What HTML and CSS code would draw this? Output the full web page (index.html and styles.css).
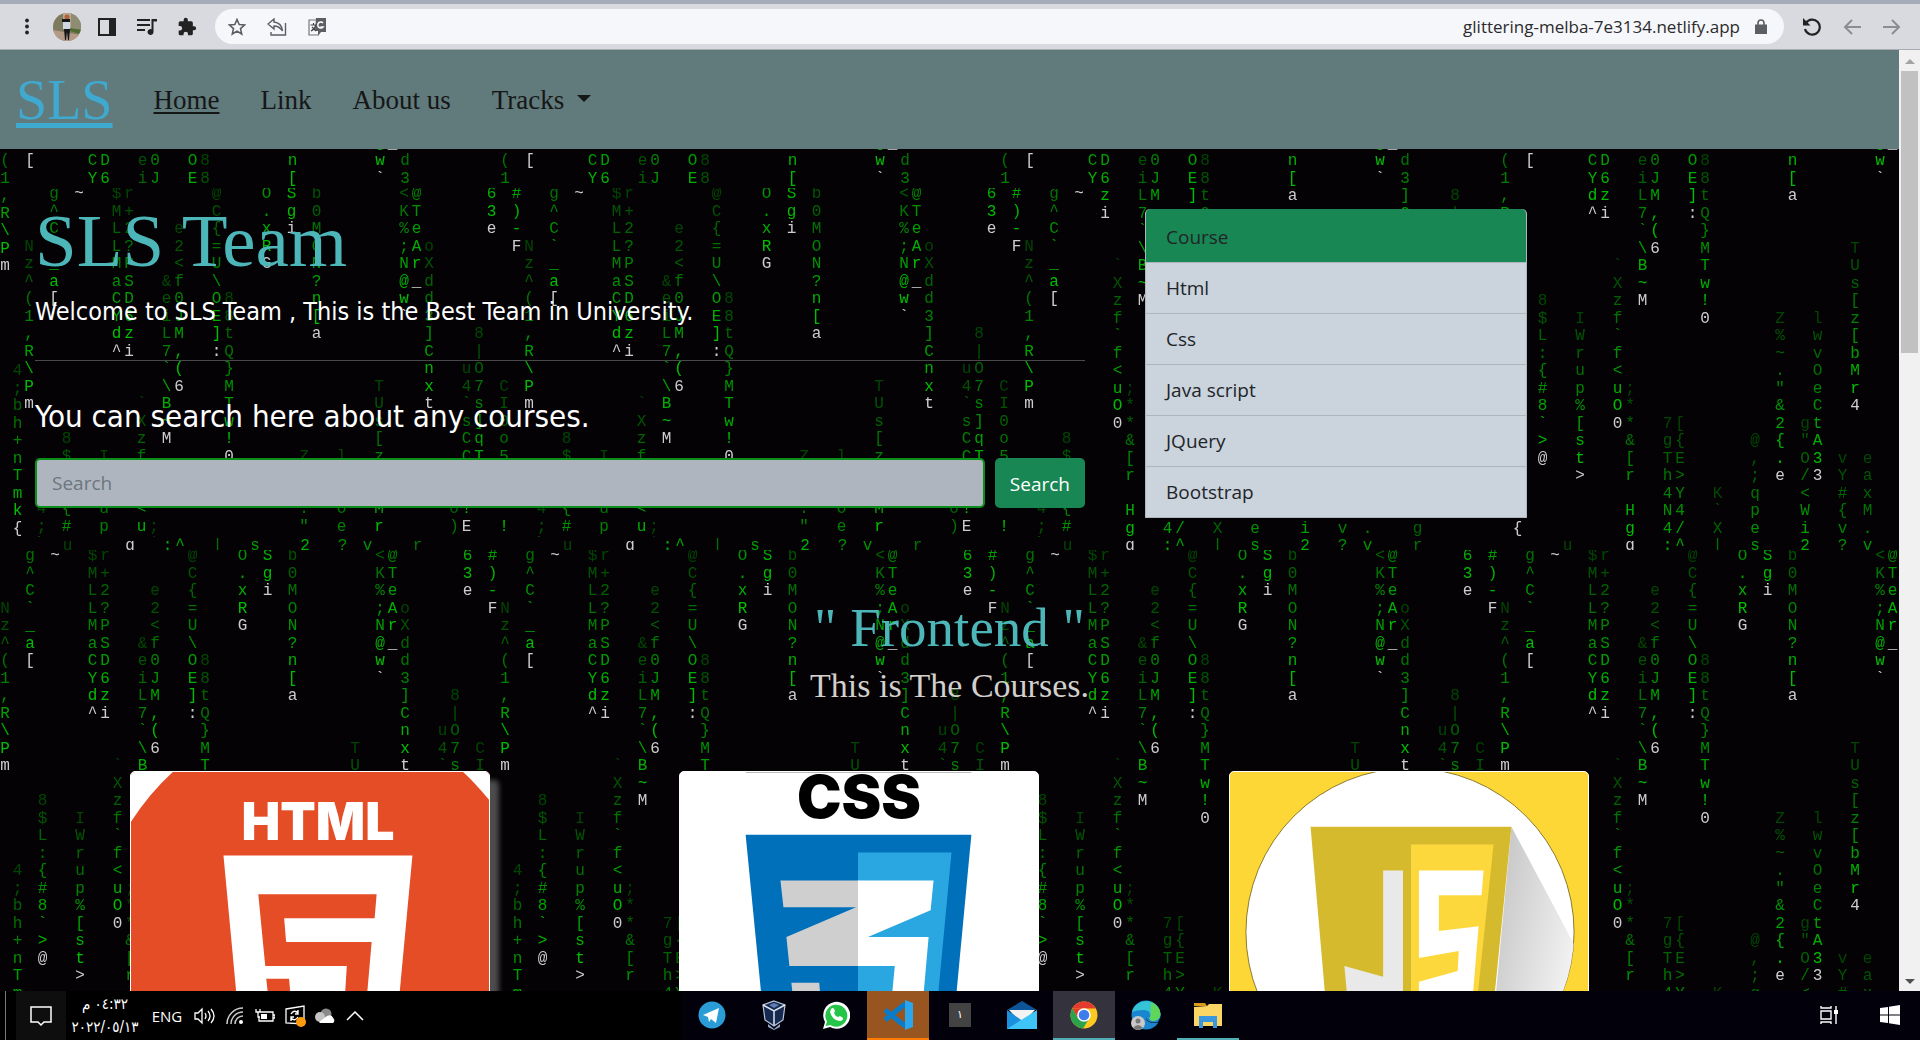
FILE: index.html
```html
<!DOCTYPE html>
<html lang="en">
<head>
<meta charset="utf-8">
<title>SLS Team</title>
<link rel="stylesheet" href="styles.css">
<script src="script.js"></script>
</head>
<body>
<header class="browser">
  <div class="tool-group">
    <button class="tool" aria-label="Menu"><svg width="20" height="20" viewBox="0 0 20 20"><g fill="#222"><circle cx="10" cy="3.500" r="1.900"/><circle cx="10" cy="9.500" r="1.900"/><circle cx="10" cy="15.500" r="1.900"/></g></svg></button>
    <button class="tool" aria-label="Profile"><svg width="28" height="28" viewBox="0 0 28 28"><defs><clipPath id="av"><circle cx="14" cy="14" r="14"/></clipPath></defs><g clip-path="url(#av)"><path fill="#7d7a5e" d="M0 0h28v28H0z"/><path fill="#b9a98c" d="M10 0h9v16h-9z"/><path fill="#8f8c74" d="M18 0h10v16H18z"/><path fill="#4d6b32" d="M17 15l11 2v4l-11-3z"/><path fill="#b59a86" d="M0 17l28 5v6H0z"/><circle cx="14" cy="4" r="2.500" fill="#b0603a"/><path fill="#cfd8e2" d="M10 7h7v9h-7z"/><path fill="#15161b" d="M9 6h8v3H9zM11 16h6l-1 11h-1l-1-8-1 8h-1z"/></g></svg></button>
    <button class="tool" aria-label="Side panel"><svg width="18" height="18" viewBox="0 0 18 18"><path fill="#222" d="M0 0h18v18H0zM2 2v14h9V2z" fill-rule="evenodd"/></svg></button>
    <button class="tool" aria-label="Media"><svg width="20" height="18" viewBox="0 0 20 18"><path d="M0 2h13M0 7h13M0 12h8" stroke="#222" stroke-width="2"/><path fill="#222" d="M14.500 1H20v2.500h-3.500V14a3 3 0 1 1-2-2.800z"/></svg></button>
    <button class="tool" aria-label="Extensions"><svg width="20" height="20" viewBox="0 0 24 24"><path fill="#222" d="M20.500 11H19V7a2 2 0 0 0-2-2h-4V3.500a2.500 2.500 0 0 0-5 0V5H4a2 2 0 0 0-2 2v3.800h1.500a2.700 2.700 0 0 1 0 5.400H2V20a2 2 0 0 0 2 2h3.800v-1.500a2.700 2.700 0 0 1 5.400 0V22H17a2 2 0 0 0 2-2v-4h1.500a2.500 2.500 0 0 0 0-5z"/></svg></button>
  </div>
  <div class="omnibox">
    <button class="tool" aria-label="Bookmark"><svg width="18" height="18" viewBox="0 0 18 18"><path d="M9 1.500l2.200 5 5.300.5-4 3.600 1.200 5.400L9 13.100 4.300 16l1.200-5.400-4-3.600 5.300-.5z" fill="none" stroke="#5b5e63" stroke-width="1.600"/></svg></button>
    <button class="tool" aria-label="Share"><svg width="20" height="18" viewBox="0 0 20 18"><path d="M18.500 5v12H4v-3M7 1L1 6l6 5V8c4 0 6 1 8.500 5C15 8 12 4.500 7 4z" fill="none" stroke="#5b5e63" stroke-width="1.400"/></svg></button>
    <button class="tool" aria-label="Translate"><svg width="18" height="18" viewBox="0 0 18 18"><path d="M9 2H1v15h9" fill="none" stroke="#777" stroke-width="1.200"/><path fill="#5b5e63" d="M8 0h10v14h-5l-3 4V13H7z"/><path d="M15 5a3 3 0 1 0 0 4h-2.500" fill="none" stroke="#fff" stroke-width="1.500"/><path d="M2.500 7h6M5.500 5v2M8 7c-1 4-3 5-5 6M4 9l4 4" fill="none" stroke="#444" stroke-width="1.200"/></svg></button>
    <input class="address" type="text" aria-label="Address" value="glittering-melba-7e3134.netlify.app">
    <svg class="lock" width="12" height="15" viewBox="0 0 12 15"><path fill="#5b5e63" d="M0 5.500h12V15H0z"/><path d="M3 6V4a3 3 0 0 1 6 0v2" fill="none" stroke="#5b5e63" stroke-width="1.600"/></svg>
  </div>
  <div class="tool-group">
    <button class="tool" aria-label="Reload"><svg width="20" height="18" viewBox="0 0 20 18"><path d="M4 5a7.500 7.500 0 1 1-1 6" fill="none" stroke="#222" stroke-width="2.200"/><path fill="#222" d="M1 0v7.500h7.500z"/></svg></button>
    <button class="tool" aria-label="Back"><svg width="18" height="16" viewBox="0 0 18 16"><path d="M9 1L2 8l7 7M2 8h16" fill="none" stroke="#8b8d93" stroke-width="2"/></svg></button>
    <button class="tool" aria-label="Forward"><svg width="18" height="16" viewBox="0 0 18 16"><path d="M9 1l7 7-7 7M16 8H0" fill="none" stroke="#8b8d93" stroke-width="2"/></svg></button>
  </div>
</header>

<div class="viewport">
  <div class="page">
    <nav class="navbar">
      <a class="brand" href="#">SLS</a>
      <a class="nav-link active" href="#">Home</a>
      <a class="nav-link" href="#">Link</a>
      <a class="nav-link" href="#">About us</a>
      <a class="nav-link dropdown" href="#">Tracks</a>
    </nav>
    <main>
      <section class="hero">
        <div class="intro">
          <h1>SLS Team</h1>
          <p class="welcome">Welcome to SLS Team , This is the Best Team in University.</p>
          <hr>
          <h2>You can search here about any courses.</h2>
          <form class="search">
            <input type="search" placeholder="Search" aria-label="Search">
            <button type="button">Search</button>
          </form>
        </div>
        <ul class="courses">
          <li class="head">Course</li>
          <li>Html</li>
          <li>Css</li>
          <li>Java script</li>
          <li>JQuery</li>
          <li>Bootstrap</li>
        </ul>
      </section>
      <section class="tracks">
        <h2 class="track-title">" Frontend "</h2>
        <p class="track-sub">This is The Courses.</p>
        <div class="cards">
          <article class="card raised">
            <svg viewBox="0 0 360 360" role="img" aria-label="HTML 5">
              <path fill="#e44d26" d="M0 0h360v360H0z"/>
              <path fill="#fff" d="M0 0h42Q18 22 0 50zM334 0h26v28Q346 11 334 0z"/>
              <text class="logo-word" x="188" y="68" font-size="52" fill="#fff">HTML</text>
              <path fill="#fff" d="M93 84h190l-22 236-73 24-73-24z"/>
              <path fill="#e44d26" d="M128 123h119l-2 24h-91l2 24h86l-8 92-46 13-46-13-6-55h23l3 36 26 8 26-8 3-49H135z"/>
            </svg>
          </article>
          <article class="card">
            <svg viewBox="0 0 360 360" role="img" aria-label="CSS 3">
              <path fill="#fff" d="M0 0h360v360H0z"/>
              <path fill="#bbb" d="M66 0h227v1H66z"/>
              <text class="logo-word" x="180" y="46" font-size="60" fill="#000">CSS</text>
              <path fill="#0070bb" d="M66 63h227l-25 266-88 25-88-25z"/>
              <path fill="#2aa7e0" d="M179 81h94l-22 234-72 20z"/>
              <path fill="#d0cfcf" d="M101 109h79v86h-70l-3-29 70-30h-73zM112 212h28l3 35 37 11v28l-62-18z"/>
              <path fill="#fff" d="M179 109h76l-3 30-63 27h61l-9 102-62 18v-28l32-10 5-53h-37z"/>
            </svg>
          </article>
          <article class="card">
            <svg viewBox="0 0 360 360" role="img" aria-label="JavaScript">
              <defs>
                <linearGradient id="cast" x1="0" y1="0" x2="1" y2="0.600"><stop offset="0" stop-color="#bdbdbd"/><stop offset="1" stop-color="#f6f6f6"/></linearGradient>
                <clipPath id="disc"><circle cx="181" cy="161" r="165"/></clipPath>
              </defs>
              <path fill="#fdd736" d="M0 0h360v360H0z"/>
              <circle cx="181" cy="161" r="165" fill="#fff" stroke="#8a7a30" stroke-width="1"/>
              <path clip-path="url(#disc)" fill="url(#cast)" d="M283 55l64 120v160h-90z"/>
              <path fill="#d5ba2e" d="M81 55h202l-22 220-80 24-81-24z"/>
              <path fill="#fdd83c" d="M182 73h83l-20 190-63 20z"/>
              <path fill="#e9e9e9" d="M154 99h20v146l-56-18-3-32 39 11z"/>
              <path fill="#fff" d="M190 99h65l-2 25h-43v36l40-5-6 72-54 18v-34l39-11 1-20-40 7z"/>
            </svg>
          </article>
        </div>
      </section>
    </main>
  </div>
  <div class="scrollbar">
    <span class="arrow up"></span>
    <span class="thumb"></span>
    <span class="arrow down"></span>
  </div>
</div>

<footer class="taskbar">
  <div class="tray">
    <button class="notify" aria-label="Notifications"><svg width="22" height="22" viewBox="0 0 22 22"><path d="M1 2h20v15h-7l-3 3-3-3H1z" fill="none" stroke="#fff" stroke-width="1.500"/></svg></button>
    <div class="clock"><span dir="rtl">٠٤:٣٢ م</span><span>٢٠٢٢/٠٥/١٣</span></div>
    <span class="lang">ENG</span>
    <button class="tray-icon" aria-label="Volume"><svg width="22" height="18" viewBox="0 0 22 18"><path d="M1 6h3l4-4v14l-4-4H1zM11 6q2 3 0 6M14 4q4 5 0 10M17 2q6 7 0 14" fill="none" stroke="#fff" stroke-width="1.300"/></svg></button>
    <button class="tray-icon" aria-label="Wi-Fi"><svg width="18" height="18" viewBox="0 0 18 18"><path d="M1 17A16 16 0 0 1 17 1M5 17A12 12 0 0 1 17 5M9 17a8 8 0 0 1 8-8" fill="none" stroke="#ccc" stroke-width="1.500"/><circle cx="15" cy="15" r="2" fill="#fff"/></svg></button>
    <button class="tray-icon" aria-label="Battery"><svg width="20" height="16" viewBox="0 0 20 16"><path d="M5 4h13v9H4V9M18 7h2v3h-2M1 1v3h4V1M3 4v5h2" fill="none" stroke="#fff" stroke-width="1.300"/><path fill="#fff" d="M6 6h6v5H6z"/></svg></button>
    <button class="tray-icon" aria-label="Updates"><svg width="22" height="22" viewBox="0 0 22 22"><path d="M2 4l18-3v18L2 18z" fill="none" stroke="#fff" stroke-width="1.300"/><path d="M7 9q3-5 7-1M14 5v4h-3M14 12q-3 5-7 1M7 16v-4h3" fill="none" stroke="#fff" stroke-width="1.400"/><circle cx="17" cy="17" r="5" fill="#ff9a0c"/></svg></button>
    <button class="tray-icon" aria-label="OneDrive"><svg width="22" height="16" viewBox="0 0 22 16"><circle cx="12" cy="6" r="5.500" fill="#8a8a8a"/><circle cx="6" cy="9" r="5" fill="#c4c4c4"/><path fill="#fff" d="M5 14l8-6q5-2 6 2a3 3 0 0 1 0 5H6z"/></svg></button>
    <button class="tray-icon" aria-label="Show hidden icons"><svg width="18" height="10" viewBox="0 0 18 10"><path d="M1 9l8-8 8 8" fill="none" stroke="#fff" stroke-width="1.500"/></svg></button>
  </div>
  <div class="apps">
    <button class="app" aria-label="Telegram"><svg width="28" height="28" viewBox="0 0 28 28"><circle cx="14" cy="14" r="13.500" fill="#2a9dd6"/><path fill="#fff" d="M5 14l16-7-3 15-5-4-2 3-1-5z"/></svg></button>
    <button class="app" aria-label="VirtualBox"><svg width="26" height="30" viewBox="0 0 26 30"><path fill="#8fa5c8" d="M7 24l6 5 6-5v3l-6 3-6-3z"/><path fill="#16294f" stroke="#b9c6dc" stroke-width="1.200" d="M13 1l11 4-2 15-9 6-9-6L2 5z"/><path fill="#5f7fb4" d="M8 5l5-2 5 2-5 3z"/><path d="M2 5l11 6 11-6M13 11v14" stroke="#dbe4f2" stroke-width="1.500" fill="none"/></svg></button>
    <button class="app" aria-label="WhatsApp"><svg width="28" height="28" viewBox="0 0 28 28"><path fill="#fff" d="M1 28l2-7A13.500 13.500 0 1 1 8 26z"/><path fill="#25c648" d="M3.500 25l1.500-4.500A11 11 0 1 1 8.500 24z"/><path fill="#fff" d="M9 8q2-2 3 0l1 2-1 2q1 3 4 4l2-1 3 2q0 3-3 3Q10 19 8 11z"/></svg></button>
    <button class="app code" aria-label="Visual Studio Code"><svg width="30" height="30" viewBox="0 0 30 30"><path d="M2 10l20 16M2 20L22 4" stroke="#0a7bc8" stroke-width="5"/><path fill="#2aa6ee" d="M22 0l8 3v24l-8 3V8z"/><path fill="#98551f" d="M22 9v12l-8-6z"/></svg></button>
    <button class="app" aria-label="Calendar"><span class="date-tile">١</span></button>
    <button class="app" aria-label="Mail"><svg width="30" height="30" viewBox="0 0 30 30"><path fill="#0d5599" d="M0 10L15 1l15 9z"/><path fill="#f3f3f3" d="M2 10h26L15 24z"/><path fill="#1b90dc" d="M0 10l17 12 13 7H0z"/><path fill="#3fc4f7" d="M30 10L0 29h30z"/><path fill="#f3f3f3" d="M4 10h22l-11 9z"/></svg></button>
    <button class="app chrome" aria-label="Chrome"><svg width="28" height="28" viewBox="0 0 28 28"><circle cx="14" cy="14" r="13.500" fill="#fdc921"/><path fill="#e33b2e" d="M2.300 7.200A13.500 13.500 0 0 1 25.700 7.500H14z"/><path fill="#e33b2e" d="M2.300 7.200L8.500 18 14 7.500z"/><path fill="#2ba24c" d="M2.300 7.200A13.500 13.500 0 0 0 13 27.500L19.500 17 8.500 18z"/><circle cx="14" cy="14" r="6.800" fill="#fff"/><circle cx="14" cy="14" r="5.300" fill="#3f7eea"/></svg></button>
    <button class="app" aria-label="Edge"><svg width="30" height="30" viewBox="0 0 30 30"><circle cx="15" cy="15" r="14.500" fill="#1b86cf"/><path fill="#35c3d6" d="M1 12A14.500 14.500 0 0 1 29.500 14q0 7-8 7-5-1-2-5 0-6-7-6-7 0-11.500 2z"/><path fill="#5fd65a" d="M20 2q9 4 9.500 12-.5 6-8 7-5-1-2-5z"/><path fill="#02010b" d="M15 17q1 7 12 5l2-4 1 4-6 1q-9 0-9-6z"/><circle cx="7" cy="23" r="7" fill="#c9c9c9"/><circle cx="7" cy="21" r="2.500" fill="#777"/><path fill="#777" d="M2 28q5-6 10 0l-5 2z"/></svg></button>
    <button class="app files" aria-label="File Explorer"><svg width="28" height="26" viewBox="0 0 28 26"><path fill="#d99a15" d="M0 1h11l2 3H0z"/><path fill="#fbd664" d="M0 5l13-1 2-2h13v22H0z"/><path fill="#3a97dd" d="M5 14h18v12h-4v-6H9v6H5z"/></svg></button>
  </div>
  <div class="corner">
    <button class="app" aria-label="Task view"><svg width="20" height="18" viewBox="0 0 20 18"><path d="M1 5h10v8H1zM1 0v2h10V0M1 18v-2h10v2M16 0v18" fill="none" stroke="#fff" stroke-width="1.400"/><path fill="#fff" d="M14 4h4v4h-4z"/></svg></button>
    <button class="app" aria-label="Start"><svg width="20" height="20" viewBox="0 0 20 20"><path fill="#fff" d="M0 3l8-1v7.500H0zM9 1.800L20 0v9.500H9zM0 10.500h8V18l-8-1zM9 10.500h11V20L9 18.200z"/></svg></button>
  </div>
</footer>
</body>
</html>
```
FILE: styles.css
```css
* { box-sizing: border-box; }

:root {
  --sans: "Open Sans", "Noto Sans", sans-serif;
  --serif: "Liberation Serif", serif;
  --wide: "DejaVu Sans Condensed", "DejaVu Sans", sans-serif;
  --green: #198754;
  --teal: #4db6b8;
}

body {
  margin: 0;
  height: 100vh;
  display: flex;
  flex-direction: column;
  overflow: hidden;
  font-family: var(--sans);
  background: #040205;
}

button { border: 0; padding: 0; background: none; font: inherit; color: inherit; }
h1, h2, p, ul { margin: 0; padding: 0; font-weight: 400; }

/* Browser toolbar */
.browser {
  flex: none;
  display: flex;
  align-items: center;
  gap: 8px;
  height: 50px;
  padding: 0 8px 0 7px;
  background: #d9dae0;
  border-top: 4px solid #a5abb9;
  border-bottom: 1px solid #a9acb1;
}
.tool-group { display: flex; }
.tool {
  width: 40px;
  height: 35px;
  display: flex;
  align-items: center;
  justify-content: center;
}
.omnibox {
  flex: 1;
  display: flex;
  align-items: center;
  height: 35px;
  padding: 0 17px 0 2px;
  border-radius: 18px;
  background: #f6f7fa;
}
.address {
  flex: 1;
  border: 0;
  background: none;
  text-align: right;
  font: 17px/24px var(--sans);
  color: #2a2b2e;
  padding: 0 15px 0 0;
}

/* Page area with its scrollbar */
.viewport { flex: 1; min-height: 0; display: flex; }
.page {
  flex: 1;
  overflow: hidden;
  background: #040205 var(--rain) 0 0;
}
.scrollbar {
  flex: none;
  width: 21px;
  display: flex;
  flex-direction: column;
  align-items: center;
  padding: 9px 0 7px;
  background: #f1f1f1;
}
.arrow { border: 5px solid transparent; height: 5px; }
.arrow.up { border-top: 0; border-bottom-color: #a3a3a3; }
.arrow.down { border-bottom: 0; border-top-color: #505050; margin-top: auto; }
.thumb { width: 17px; height: 282px; margin-top: 7px; background: #c1c1c1; }

.navbar {
  display: flex;
  align-items: center;
  gap: 41px;
  height: 99px;
  padding: 0 16px;
  background: #617a7b;
  font-family: var(--serif);
}
.brand { font-size: 56px; line-height: 64px; color: #3fa9cf; text-decoration-thickness: 5px; text-underline-offset: 4px; }
.nav-link { font-size: 27px; line-height: 36px; color: #151717; text-decoration: none; }
.nav-link.active { text-decoration: underline; text-decoration-thickness: 2px; text-underline-offset: 3px; }
.dropdown::after {
  content: "";
  display: inline-block;
  margin-left: 13px;
  vertical-align: 7px;
  border: 7px solid transparent;
  border-top-color: #151717;
  border-bottom: 0;
}

.hero {
  display: flex;
  align-items: flex-start;
  gap: 49px;
  padding: 39px 372px 0 24px;
}
.intro {
  flex: 1;
  padding: 10px 11px 29px;
  background: #040205 var(--rain) 0 0;
  color: #fff;
}
.intro h1 { font: 75px/86px var(--serif); color: var(--teal); }
.welcome { margin-top: 8px; font: 25px/40px var(--wide); }
.intro hr { height: 1px; margin: 28px 0 35px; border: 0; background: #4a484b; }
.intro h2 { font: 31px/40px var(--wide); }
.search { display: flex; gap: 10px; margin-top: 22px; }
.search input {
  flex: 1;
  height: 50px;
  padding: 0 15px;
  border: 2px solid #0a8f1a;
  border-radius: 5px;
  background: #aeb5bf;
  font: 19px/30px var(--sans);
}
.search input::placeholder { color: #6c757d; opacity: 1; }
.search button {
  padding: 2px 15px 0;
  border-radius: 5px;
  background: var(--green);
  color: #fff;
  font-size: 19px;
}

.courses {
  width: 382px;
  margin: 21px 0 0;
  list-style: none;
  border: 1px solid #adb5bd;
  border-top: 0;
  border-radius: 5px 5px 0 0;
  overflow: hidden;
  background: #cbd3dc;
  color: #212529;
}
.courses li { padding: 10px 20px; font-size: 19px; line-height: 30px; }
.courses li + li { border-top: 1px solid #adb5bd; }
.courses .head { padding: 13px 20px 10px; background: var(--green); }

.tracks { padding-top: 60px; }
.track-title { font: 55px/62px var(--serif); color: var(--teal); text-align: center; }
.track-sub { margin-top: 7px; font: 34px/40px var(--serif); color: #d3cfcc; text-align: center; }
.cards {
  display: grid;
  grid-template-columns: repeat(3, 1fr);
  justify-items: center;
  margin-top: 65px;
  padding: 0 215px 0 35px;
}
.card {
  width: 360px;
  border: 1px solid #fff;
  border-radius: 5px;
  overflow: hidden;
  background: #fff;
}
.card svg { display: block; width: 100%; }
.raised { box-shadow: 9px 9px 5px #4c4c4c; }
.logo-word { font-family: Inter, sans-serif; font-weight: 900; text-anchor: middle; }

/* Taskbar */
.taskbar {
  flex: none;
  display: grid;
  grid-template-columns: 1fr auto 1fr;
  height: 49px;
  background: #02010b;
  color: #fff;
}
.tray { display: flex; align-items: center; padding-left: 5px; background: #000; }
.tray::before { content: ""; width: 1px; height: 49px; margin-right: 10px; background: #777; }
.notify { width: 50px; height: 49px; display: grid; place-items: center; background: #0e0e0e; }
.clock {
  width: 78px;
  display: flex;
  flex-direction: column;
  align-items: center;
  font: 15px/23px "DejaVu Sans Condensed", "DejaVu Sans", sans-serif;
}
.lang { width: 46px; text-align: center; font-size: 15px; }
.tray-icon { width: 30px; height: 49px; display: grid; place-items: center; }
.apps { display: flex; }
.app { width: 62px; height: 49px; display: grid; place-items: center; border-bottom: 2px solid transparent; }
.code { background: #98551f; border-color: #ff7a00; }
.chrome { background: #34323c; border-color: #4fadb3; }
.files { border-color: #4fadb3; }
.date-tile { width: 22px; height: 24px; background: #434343; font: 11px/24px "DejaVu Sans", sans-serif; text-align: center; }
.corner { display: flex; justify-content: flex-end; }
.corner .app { width: 60px; }
```
FILE: script.js
```js
// Falling-code wallpaper: a 500x500 tile of 40 columns by 29 rows.
// Each stream is [column, first row, characters, row of its bright head].
const streams = [
  [0, 3, "Nz^(1,R\\Pm", 12],
  [1, 18, "4;bh+nTmk{", 27],
  [2, 0, "g^C`_a[", 6],
  [3, 14, "8$L:{#8`>@", 23],
  [4, 0, "~", 0],
  [5, 28, "u", 37],
  [6, 15, "IWrup%[st>", 24],
  [7, 0, "$MLLMaCYd^", 9],
  [8, 0, "r+2?PSD6zi", 9],
  [9, 12, "`Xzf`f<uO0", 21],
  [10, 19, ";**&[r Hgq", 28],
  [11, 5, "&eiL7`\\B~M", 14],
  [12, 2, "e2<f0JM,(6", 11],
  [13, 21, "7gTh4N4:", 30],
  [14, 21, "[{E>Y4/^", 30],
  [15, 0, "@C{=U\\OE]:", 9],
  [16, 6, "88tQ}MTw!0", 15],
  [17, 25, "K`X|", 34],
  [19, 0, "O.xRG", 4],
  [20, 22, "@,;qpes", 31],
  [21, 0, "Sgi", 2],
  [22, 15, "Z%~.\"&2{.e", 24],
  [23, 0, "b0MON?n[a", 8],
  [24, 21, "g\"O/<Wi2", 30],
  [25, 15, "lwvOeCtA33", 24],
  [27, 23, "vY#{v?", 32],
  [28, 11, "TUs[z[bMr4", 20],
  [29, 23, "eaxM.v", 32],
  [30, 0, "<K%;N@w`", 7],
  [31, 0, "@TeAr_", 5],
  [32, 3, "oXdd3]Cnxt", 12],
  [33, 27, "gr", 34],
  [34, 18, "0)", 25],
  [35, 10, "u4`sCC  !E", 19],
  [36, 8, "8|O7s]qT", 17],
  [37, 0, "63e", 2],
  [38, 11, "CI0o5   !", 20],
  [39, 0, "#)-F", 3]
];

const escapes = { "&": "&amp;", "<": "&lt;", ">": "&gt;" };
let glyphs = "";
for (const [col, first, chars, head] of streams) {
  [...chars].forEach((ch, i) => {
    if (ch === " ") return;
    const row = first + i;
    const age = head - row;
    const fill = age === 0 ? "rgb(205,205,205)" : `rgb(0,${204 - age * 15},0)`;
    glyphs += `<text x="${5 + col * 12.5}" y="${10 + row * 17.5}" fill="${fill}">${escapes[ch] || ch}</text>`;
  });
}
const tile = `<svg xmlns="http://www.w3.org/2000/svg" width="500" height="500" font-family="Liberation Mono, monospace" font-size="16" text-anchor="middle">${glyphs}</svg>`;
document.documentElement.style.setProperty("--rain", `url("data:image/svg+xml,${encodeURIComponent(tile)}")`);
```
